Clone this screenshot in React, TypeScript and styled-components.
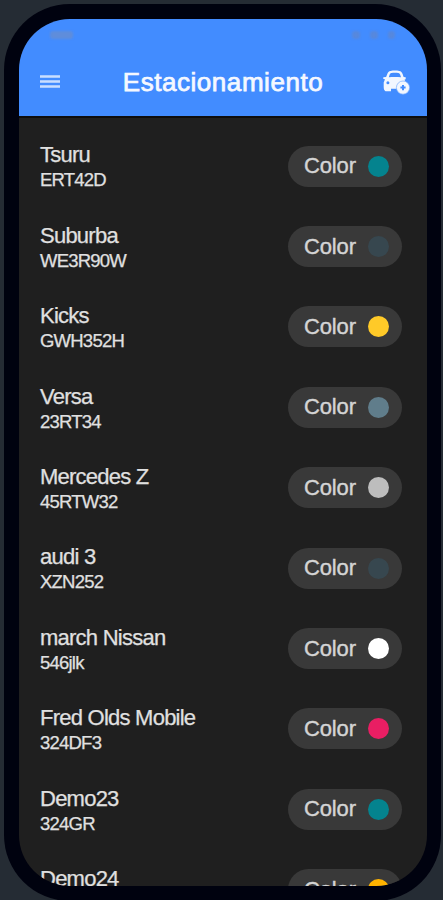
import React from 'react';
import styled, { createGlobalStyle } from 'styled-components';

const GlobalStyle = createGlobalStyle`
  * { box-sizing: border-box; }
  html, body { margin: 0; background: #252c34; overflow: hidden; }
  body { font-family: "Liberation Sans", Arial, sans-serif; }
`;

const Stage = styled.main`
  width: 443px;
  height: 900px;
  overflow: hidden;
  padding: 4px 2px 0 4px;
  background: #252c34;
`;

const Phone = styled.div`
  width: 437px;
  height: 897px;
  padding: 15px 14px 15px 15px;
  border-radius: 66px;
  background: #00020f;
`;

const Screen = styled.div`
  height: 867px;
  border-radius: 51px;
  overflow: hidden;
  background: #1f1f1f;
`;

const Header = styled.header`
  height: 99px;
  background: #428cff;
  border-bottom: 2px solid #0d0d0d;
`;

const StatusBar = styled.div`
  height: 32px;
  display: flex;
  justify-content: space-between;
  align-items: center;
  padding: 0 32px 0 31px;
`;

const Clock = styled.div`
  width: 23px;
  height: 8px;
  border-radius: 3px;
  background: #5f8ddb;
  filter: blur(1px);
`;

const Indicators = styled.div`
  display: flex;
  gap: 10px;
`;

const Indicator = styled.div<{ $size: number }>`
  width: ${p => p.$size}px;
  height: 8px;
  border-radius: 3px;
  background: #5788dd;
  filter: blur(1px);
`;

const Toolbar = styled.div`
  height: 62px;
  display: grid;
  grid-template-columns: 84px 1fr 84px;
  align-items: center;
`;

const IconButton = styled.button<{ $end?: boolean }>`
  display: flex;
  justify-content: ${p => (p.$end ? 'flex-end' : 'flex-start')};
  padding: ${p => (p.$end ? '0 17px 0 0' : '0 0 0 21px')};
  border: 0;
  background: none;
  color: #f2f7ff;
`;

const Title = styled.h1`
  margin: 0;
  text-align: center;
  white-space: nowrap;
  font-size: 26px;
  line-height: 30px;
  font-weight: 400;
  letter-spacing: 0.55px;
  color: #f5f8ff;
  -webkit-text-stroke: 0.75px #f5f8ff;
`;

const List = styled.ul`
  margin: 0;
  padding: 8px 25px 0 21px;
  list-style: none;
`;

const Row = styled.li`
  height: 80.4px;
  display: flex;
  align-items: center;
  justify-content: space-between;
`;

const CarInfo = styled.div`
  height: 50px;
  margin-top: 2.5px;
`;

const Name = styled.div`
  font-size: 22px;
  line-height: 26px;
  letter-spacing: -0.76px;
  color: #e0e0e0;
  -webkit-text-stroke: 0.25px #e0e0e0;
`;

const Plate = styled.div`
  font-size: 18.5px;
  line-height: 24px;
  letter-spacing: -0.78px;
  color: #e0e0e0;
  -webkit-text-stroke: 0.25px #e0e0e0;
`;

const Chip = styled.div`
  width: 114px;
  height: 41px;
  padding: 0 13px 0 16px;
  border-radius: 21px;
  display: flex;
  align-items: center;
  justify-content: space-between;
  background: #393939;
  color: #d4d4d4;
  font-size: 22px;
  line-height: 26px;
  letter-spacing: -0.15px;
  -webkit-text-stroke: 0.4px #d4d4d4;
`;

const Swatch = styled.span<{ $color: string }>`
  width: 21px;
  height: 21px;
  border-radius: 50%;
  background: ${p => p.$color};
`;

const MenuIcon = () => (
  <svg width="20" height="14" viewBox="0 0 20 14" stroke="#c9deff" strokeWidth="2.6">
    <path d="M0 1.500h20M0 6.500h20M0 11.500h20" />
  </svg>
);

const AddCarIcon = () => (
  <svg width="27" height="25" viewBox="0 0 27 25" fill="none">
    <path
      fill="currentColor"
      fillRule="evenodd"
      d="M4.200 4.200C4.800 2 5.800 1.200 7.500.900c3-.5 6-.5 8.800 0 1.700.3 2.700 1.100 3.400 3.300l.9 2.800 2.100.3v1.900l-1.100.2.800 3.300v6H8v2.500H2.500C1.300 20.600.700 19.300.700 17v-4.500l1.300-3.200-1.700-.3V7.300l2.800-.3 1.100-2.800Zm2.500.4-.9 2.700c4-.5 8-.5 12.200 0l-.9-2.700c-.4-1.100-.8-1.500-1.700-1.600-2.300-.3-4.800-.3-7 0-.9.1-1.400.5-1.700 1.600ZM4.900 11.300a1.500 1.500 0 1 0 0 3 1.500 1.500 0 0 0 0-3Z"
    />
    <circle cx="20" cy="17.600" r="6.600" fill="currentColor" stroke="#78adff" strokeWidth="0.700" />
    <path d="M20 15v5.200M17.400 17.600h5.200" stroke="#428cff" strokeWidth="2" />
  </svg>
);

const cars = [
  { name: 'Tsuru', plate: 'ERT42D', color: '#04838e' },
  { name: 'Suburba', plate: 'WE3R90W', color: '#37474f' },
  { name: 'Kicks', plate: 'GWH352H', color: '#ffca28' },
  { name: 'Versa', plate: '23RT34', color: '#607d8b' },
  { name: 'Mercedes Z', plate: '45RTW32', color: '#bdbdbd' },
  { name: 'audi 3', plate: 'XZN252', color: '#37474f' },
  { name: 'march Nissan', plate: '546jlk', color: '#ffffff' },
  { name: 'Fred Olds Mobile', plate: '324DF3', color: '#e91e63' },
  { name: 'Demo23', plate: '324GR', color: '#04838e' },
  { name: 'Demo24', color: '#ffb300' },
];

export default function App() {
  return (
    <Stage>
      <GlobalStyle />
      <Phone>
        <Screen>
          <Header>
            <StatusBar>
              <Clock />
              <Indicators>
                <Indicator $size={8} />
                <Indicator $size={8} />
                <Indicator $size={7} />
              </Indicators>
            </StatusBar>
            <Toolbar>
              <IconButton aria-label="Menu"><MenuIcon /></IconButton>
              <Title>Estacionamiento</Title>
              <IconButton $end aria-label="Agregar"><AddCarIcon /></IconButton>
            </Toolbar>
          </Header>
          <List>
            {cars.map(car => (
              <Row key={car.name}>
                <CarInfo>
                  <Name>{car.name}</Name>
                  {car.plate && <Plate>{car.plate}</Plate>}
                </CarInfo>
                <Chip>Color<Swatch $color={car.color} /></Chip>
              </Row>
            ))}
          </List>
        </Screen>
      </Phone>
    </Stage>
  );
}
